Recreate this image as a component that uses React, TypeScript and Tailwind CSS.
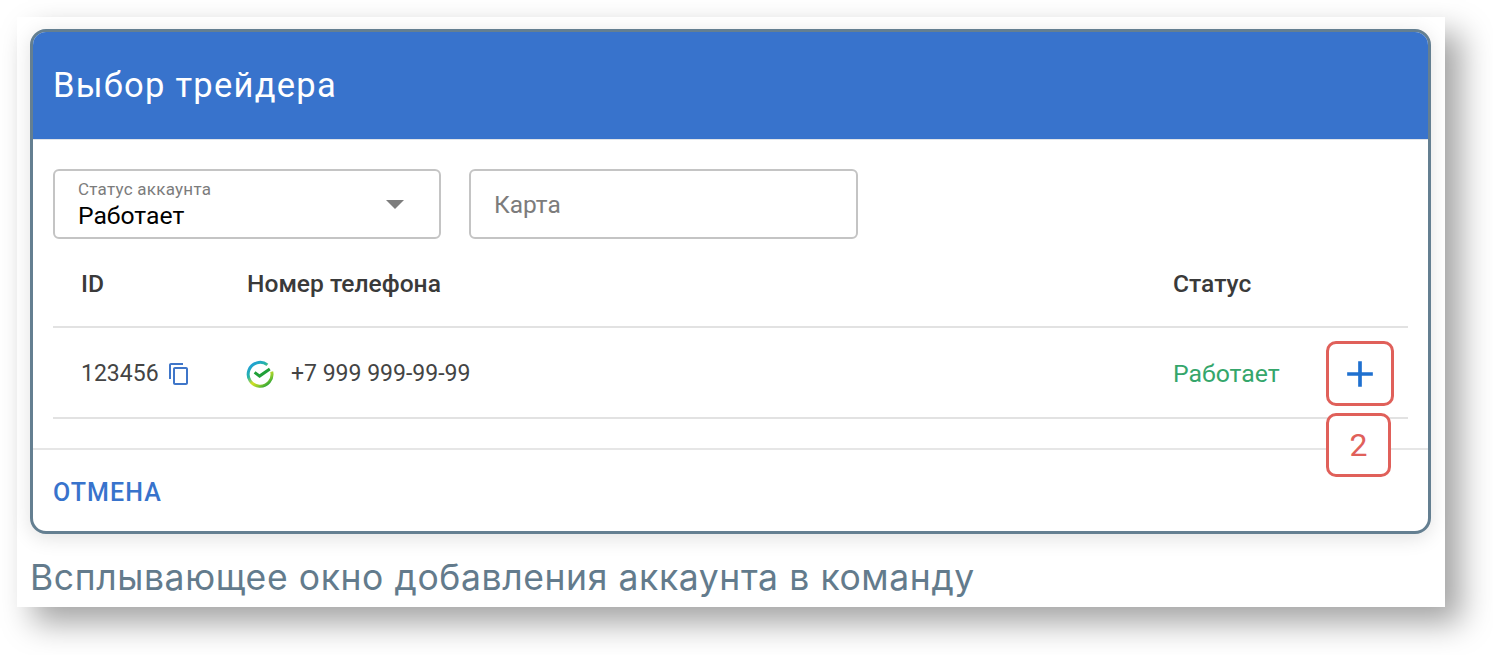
import React from 'react';

const SberLogo = () => (
  <svg width="28" height="28" viewBox="0 0 28 28" fill="none" className="shrink-0">
    <defs>
      <linearGradient id="sberRing" x1="4" y1="3" x2="22" y2="26" gradientUnits="userSpaceOnUse">
        <stop offset="0" stopColor="#1e9be0" />
        <stop offset="0.35" stopColor="#27b5a5" />
        <stop offset="0.6" stopColor="#d5e021" />
        <stop offset="0.8" stopColor="#8ccb2e" />
        <stop offset="1" stopColor="#21a038" />
      </linearGradient>
    </defs>
    <path
      d="M21.4 4.9A11.9 11.9 0 1 0 25.7 11.6"
      stroke="url(#sberRing)"
      strokeWidth="3"
    />
    <path d="M8.6 12.4l5 3.7 10.2-7" stroke="#21a038" strokeWidth="3" />
  </svg>
);

const CopyIcon = () => (
  <svg width="24" height="24" viewBox="0 0 24 24" fill="#3f76c9" className="shrink-0">
    <path d="M16 1H4c-1.1 0-2 .9-2 2v14h2V3h12V1zm3 4H8c-1.1 0-2 .9-2 2v14c0 1.1.9 2 2 2h11c1.1 0 2-.9 2-2V7c0-1.1-.9-2-2-2zm0 16H8V7h11v14z" />
  </svg>
);

const AddIcon = () => (
  <svg width="44" height="44" viewBox="0 0 24 24" fill="#1f70cf">
    <path d="M19 13h-6v6h-2v-6H5v-2h6V5h2v6h6v2z" />
  </svg>
);

export default function App() {
  return (
    <div className="min-h-[655px] bg-white p-[17px] pb-0 [font-family:Roboto,'Liberation_Sans',sans-serif]">
      <div className="w-[1428px] h-[590px] bg-white pt-3 pl-[13px] shadow-[16px_16px_30px_rgba(0,0,0,0.36)]">
        <div className="relative w-[1401px] h-[505px] rounded-[16px] border-[3px] border-[#647f91] bg-white shadow-[0_4px_20px_rgba(0,0,0,0.12)]">
          <div className="flex h-[107px] items-center rounded-t-[13px] bg-[#3873cc] pl-[20px] text-[34.5px] tracking-[1.25px] text-white">
            Выбор трейдера
          </div>
          <div className="h-px bg-[#dfe3e8]" />

          <div className="flex gap-[28px] pl-[20px] pt-[29px]">
            <div className="flex h-[70px] w-[388px] items-center justify-between rounded-[6px] border-2 border-[#c4c4c4] pl-[23px] pr-[35px]">
              <div className="flex flex-col pt-[3px]">
                <span className="text-[17px] leading-[17px] tracking-[0.25px] text-[#7c7c7c]">Статус аккаунта</span>
                <span className="mt-[3px] text-[24.7px] leading-[30px] text-black">Работает</span>
              </div>
              <div className="h-0 w-0 border-x-[9px] border-t-[9px] border-x-transparent border-t-[#7d7d7d]" />
            </div>
            <div className="flex h-[70px] w-[389px] items-center rounded-[6px] border-2 border-[#c4c4c4] pl-[23px] pt-[2px] text-[24.5px] text-[#7c7c7c]">
              Карта
            </div>
          </div>

          <div className="ml-[20px] mr-[20px]">
            <div className="flex h-[89px] items-center border-b-2 border-[#e2e2e2] pt-[4px] text-[24.6px] font-medium text-[#3a3a3a]">
              <div className="w-[194px] pl-[28px]">ID</div>
              <div className="flex-1">Номер телефона</div>
              <div className="w-[235px]">Статус</div>
            </div>
            <div className="flex h-[91px] items-center border-b-2 border-[#e2e2e2] text-[23px] text-[#444444]">
              <div className="flex w-[194px] items-center gap-[8px] pl-[28px] pt-[3px]">
                123456
                <CopyIcon />
              </div>
              <div className="flex flex-1 items-center gap-[17px] -ml-[1px] pt-[3px]">
                <SberLogo />
                +7 999 999-99-99
              </div>
              <div className="w-[235px] pt-[3px] text-[24.8px] text-[#35a66b]">Работает</div>
            </div>
          </div>

          <div className="mt-[29px] h-[2px] bg-[#e6e6e6]" />
          <div className="pl-[20px] pt-[28px] text-[25px] font-medium leading-[30px] tracking-[1.1px] text-[#3873cc]">ОТМЕНА</div>

          {/* annotation callouts over the table */}
          <div className="absolute left-[1293px] top-[309px] flex h-[65px] w-[68px] items-center justify-center rounded-[10px] border-[3px] border-[#e0605a] bg-white">
            <AddIcon />
          </div>
          <div className="absolute left-[1293px] top-[381px] flex h-[64px] w-[65px] items-center justify-center rounded-[10px] border-[3px] border-[#e0605a] bg-white text-[32px] text-[#e0605a]">
            2
          </div>
        </div>
        <div className="mt-[19px] text-[35.5px] leading-[50px] tracking-[0.6px] text-[#637b8c] [font-family:Inter,'Liberation_Sans',sans-serif]">
          Всплывающее окно добавления аккаунта в команду
        </div>
      </div>
    </div>
  );
}
